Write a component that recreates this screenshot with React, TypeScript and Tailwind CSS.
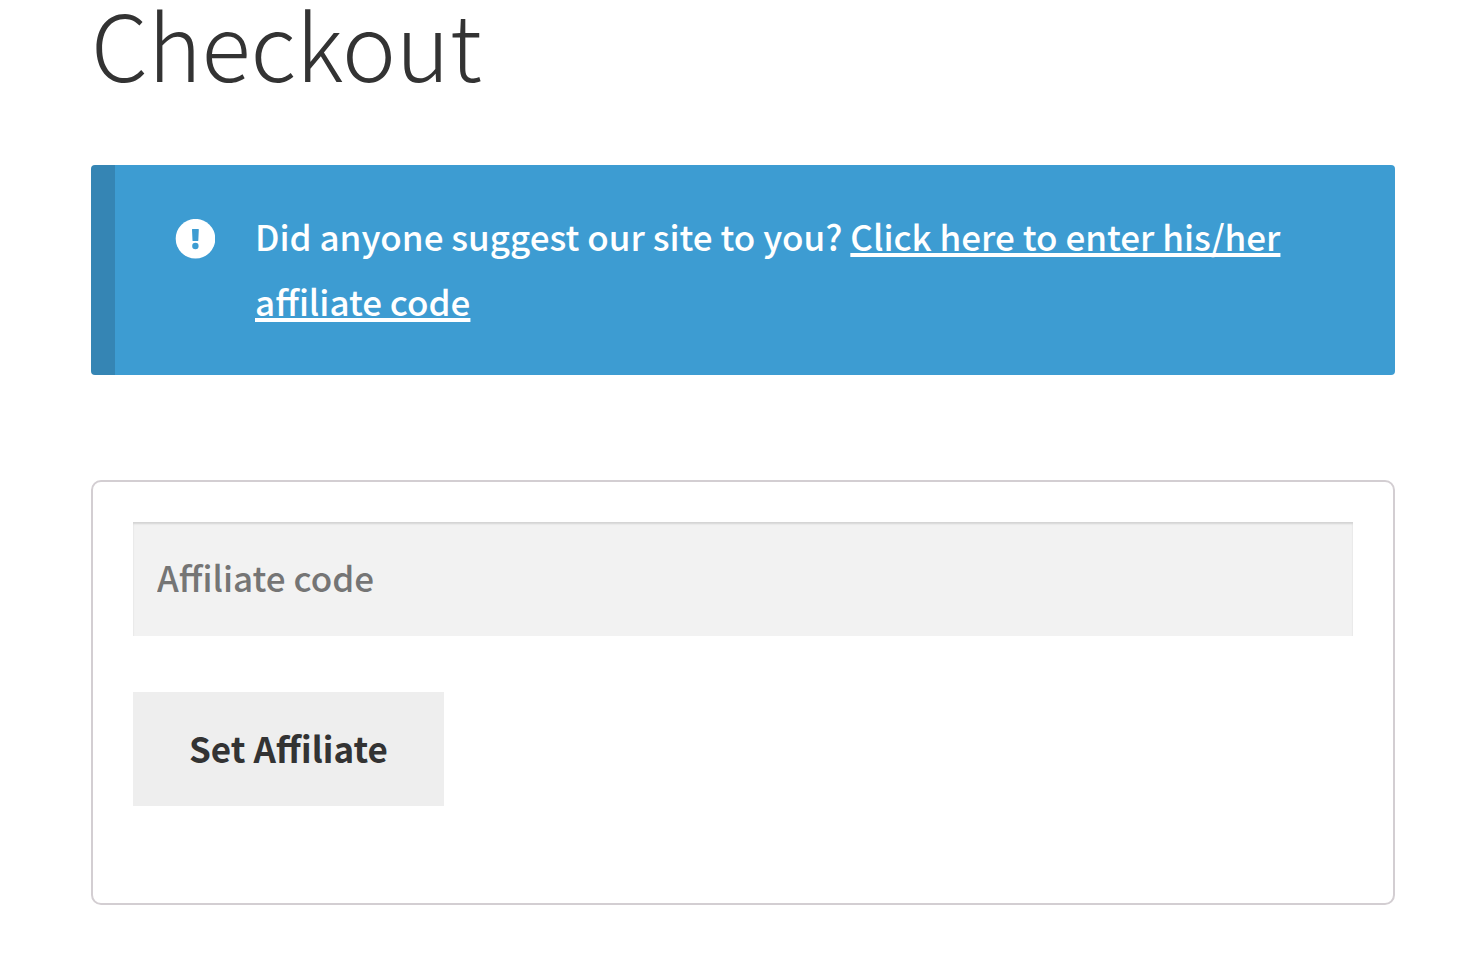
export default function App() {
  return (
    <main className="min-h-screen bg-white pl-[91px] pr-[81px] pb-16 font-['Noto_Sans_CJK_SC','Noto_Sans',sans-serif] text-[35px] leading-[65px] font-medium text-[#333]">
      <h1 className="h-[165px] text-[91px] leading-[84px] font-light">Checkout</h1>
      <div role="status" className="flex rounded-[4px] border-l-[24px] border-[#3585b4] bg-[#3d9cd2] pt-[38px] pr-20 pb-[42px] pl-[60px] text-white">
        <svg viewBox="0 0 40 40" className="mt-4 mr-10 size-10 shrink-0" aria-hidden="true">
          <circle cx="20.5" cy="19.7" r="19.8" fill="currentColor" />
          <path d="M17.4 10h6q.4 0 .4.5l-.5 11q0 .5-.6.5h-4.6q-.6 0-.6-.5l-.5-11q0-.5.4-.5z" fill="#3d9cd2" />
          <circle cx="20.4" cy="27" r="3.2" fill="#3d9cd2" />
        </svg>
        <p>
          Did anyone suggest our site to you?{" "}
          <a href="#affiliate" className="underline decoration-4 underline-offset-2 [text-decoration-skip-ink:none]">
            Click here to enter his/her affiliate code
          </a>
        </p>
      </div>
      <form id="affiliate" className="mt-[105px] rounded-[10px] border-2 border-[#d3ced2] px-10 pt-10 pb-[97px]">
        <input
          aria-label="Affiliate code"
          placeholder="Affiliate code"
          className="block h-[114px] w-full bg-[#f2f2f2] px-6 pb-1.5 shadow-[inset_0_2px_2px_rgba(0,0,0,0.125)] placeholder:text-[#757575]"
        />
        <button type="button" className="mt-14 block h-[114px] bg-[#eee] px-14 pb-1 font-bold">
          Set Affiliate
        </button>
      </form>
    </main>
  );
}
